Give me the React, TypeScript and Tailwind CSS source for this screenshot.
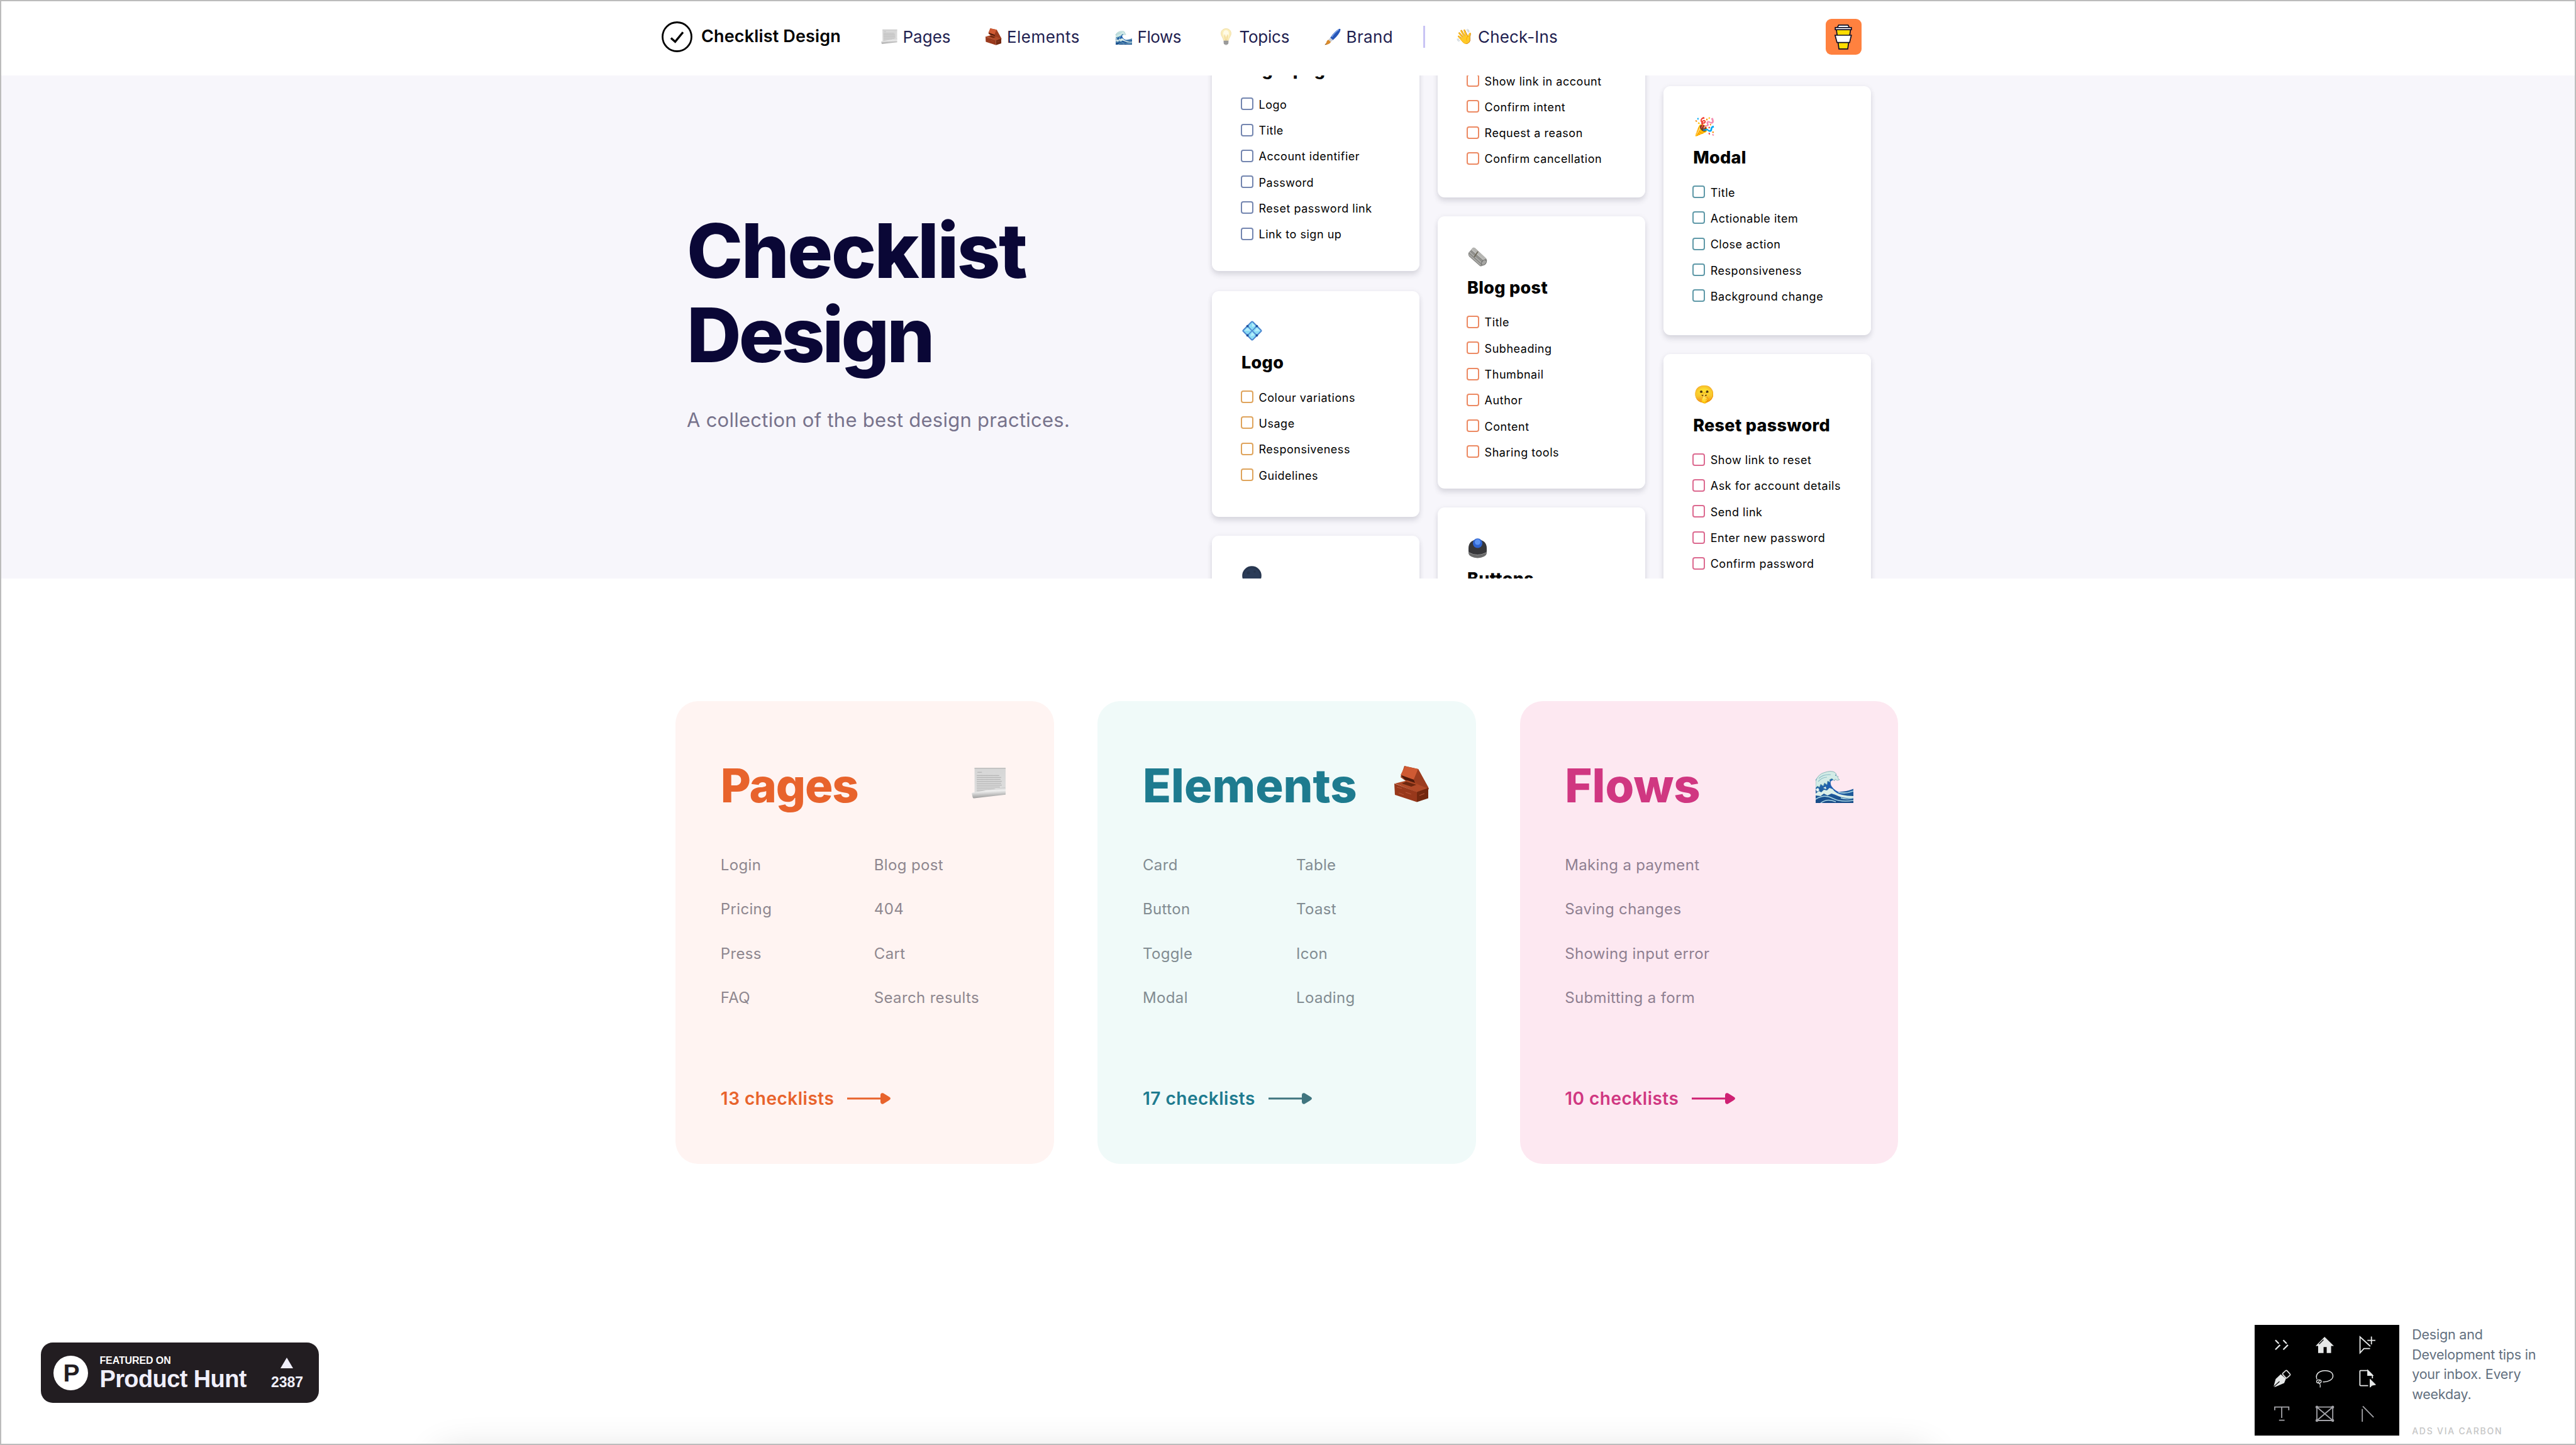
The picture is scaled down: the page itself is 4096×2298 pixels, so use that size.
import React from "react";

type IconProps = { className?: string };

function PageIcon({ className }: IconProps) {
  return (
    <svg viewBox="0 0 54 48" className={className}>
      <defs>
        <linearGradient id="roll" x1="0" y1="0" x2="0.15" y2="1">
          <stop offset="0" stopColor="#b4b4b4" />
          <stop offset="0.4" stopColor="#f0f0f0" />
          <stop offset="1" stopColor="#9c9c9c" />
        </linearGradient>
        <linearGradient id="sheet" x1="0" y1="0" x2="0" y2="1">
          <stop offset="0" stopColor="#d6d6d6" />
          <stop offset="1" stopColor="#dedede" />
        </linearGradient>
      </defs>
      <path d="M4.500 0H53v34L4.500 42Z" fill="url(#sheet)" />
      <path d="M4.500 0H53V1.400H4.500Z" fill="#bcbcbc" />
      <path d="M9 7h7M8 12h35M8 15h38M8 18h37M8 21h39M8 24h38M8 27h39M8 30h36M8 33h29M8 36h18" stroke="#a9a9a9" strokeWidth="0.900" />
      <path d="M1 39 51 30.500Q53 30 53 32V42L4 47.500Q2 47.800 1.600 46L0.300 40.500Q0 39.200 1 39Z" fill="url(#roll)" />
    </svg>
  );
}

function BrickIcon({ className }: IconProps) {
  return (
    <svg viewBox="0 0 56 58" className={className}>
      <path d="M16 0 38 5 54 34 53 42 28 31 10 18Z" fill="#a2401f" />
      <path d="M17 0.500 38 5 31 22 10 14.500Z" fill="#cf5a33" />
      <path d="M38 5 55 36 52 42 31 22Z" fill="#9c3d20" />
      <path d="M10 14.500 31 22 33 27 17 22Z" fill="#4d1a0c" />
      <path d="M1 28 21 23 54 36 36 42Z" fill="#b14a28" />
      <path d="M12 28 19 25 35 30 27 33Z" fill="#6b260f" />
      <path d="M0 28 36 41.500V57.500L1 46Z" fill="#98381b" />
      <path d="M36 41.500 54 35V51.500L36 57.500Z" fill="#73280f" />
      <path d="M4 34 12 36M18 42 27 45M7 43 15 46M40 47 48 44" stroke="#b9573a" strokeWidth="1" />
    </svg>
  );
}

function WaveIcon({ className }: IconProps) {
  return (
    <svg viewBox="0 0 60 51" className={className} preserveAspectRatio="none">
      <defs>
        <linearGradient id="sea" x1="0" y1="0" x2="0" y2="1">
          <stop offset="0" stopColor="#2f7cc4" />
          <stop offset="1" stopColor="#164a86" />
        </linearGradient>
      </defs>
      <path
        d="M0 14Q8 3 22 3L33 6 30 14Q20 16 23 25 26 32 34 33 46 34 60 28.500V51H0Z"
        fill="url(#sea)"
      />
      <path d="M20 13Q15 25 22 35L34 40 44 37Q30 32 25 24 22 18 26 13Z" fill="#1f5fb0" />
      <path d="M0 16Q4 5 14 2.500Q24-1 30 2L33 5 31 7 36 9 35 11 38 14 34 15 31 13 30 16 26 12 22 14 23 18 19 16 18 22 14 19 12 24 8 21 6 26 3 24 0 27Z" fill="#d3ebe6" stroke="#6fa5a8" strokeWidth="0.700" />
      <path d="M5 12Q12 5 24 6M4 17Q10 10 18 10" stroke="#8fbfca" strokeWidth="1.200" fill="none" />
      <path d="M0 36 5 32 9 34 13 30 18 31 22 27 27 29Q32 36 42 38 50 40 60 40V43Q46 44 36 40 30 37 25 36L19 39 13 36 8 40 0 39Z" fill="#dcefe8" />
      <path d="M0 45Q14 36 28 44 40 50 60 47M8 51Q18 43 32 49M36 34Q48 37 60 32M40 43Q50 46 60 43" stroke="#a9d5e2" strokeWidth="1.500" fill="none" />
      <path d="M0 29 4 27 6 31 2 33ZM12 27 16 25 17 29Z" fill="#e8f5f1" />
    </svg>
  );
}

function BulbIcon({ className }: IconProps) {
  return (
    <svg viewBox="0 0 17 27" className={className}>
      <path d="M8.500 0.500C13 0.500 16.500 3.700 16.500 8.200 16.500 12.500 12.800 15 12.400 19.500H4.600C4.200 15 0.500 12.500 0.500 8.200 0.500 3.700 4 0.500 8.500 0.500Z" fill="#fbeebb" stroke="#eed9a0" strokeWidth="0.800" />
      <ellipse cx="8.500" cy="8" rx="4.500" ry="5" fill="#fffbe6" />
      <path d="M6.500 10 7.300 19H9.700L10.500 10" fill="none" stroke="#e8c678" strokeWidth="0.800" />
      <path d="M4.700 19.500H12.300V24Q11 26.800 8.500 26.800 6 26.800 4.700 24Z" fill="#a9a9a9" />
      <path d="M4.700 21.500H12.300M5 23.800H12" stroke="#7c7c7c" strokeWidth="0.800" />
    </svg>
  );
}

function BrushIcon({ className }: IconProps) {
  return (
    <svg viewBox="0 0 27 27" className={className}>
      <path d="M24 0.500Q26.500-0.300 26.500 2 25 9 14 19L9.500 15Q17 4 24 0.500Z" fill="#2656b8" />
      <path d="M23.500 2Q17 6 12 14" stroke="#7fa6ea" strokeWidth="1.400" fill="none" />
      <path d="M9.500 15 14 19 10.500 22 6.500 18.500Z" fill="#c9ccd2" />
      <path d="M6.500 18.500 10.500 22Q8 26.500 0.500 26.800 3.500 24 3.500 21.500 4.500 19 6.500 18.500Z" fill="#d98a2b" />
      <path d="M3 25.900Q1.500 26.700 0.500 26.800L2.600 24.300Z" fill="#5a3a1a" />
    </svg>
  );
}

function DiamondIcon({ className }: IconProps) {
  return (
    <svg viewBox="0 0 32 32" className={className}>
      <path d="M14.200 1.300Q16-0.500 17.800 1.300L30.700 14.200Q32.500 16 30.700 17.800L17.800 30.700Q16 32.500 14.200 30.700L1.300 17.800Q-0.500 16 1.300 14.200Z" fill="#4b86cf" />
      <path d="M16 2.300 22.300 8.600 16 14.900 9.700 8.600ZM8.600 9.700 14.900 16 8.600 22.300 2.300 16ZM23.400 9.700 29.700 16 23.400 22.300 17.100 16ZM16 17.100 22.300 23.400 16 29.700 9.700 23.400Z" fill="#8adcf5" />
      <path d="M16 3.500 21 8.600 16 10ZM8.600 11 13.500 16 4 16ZM23.400 11 28.500 16 20 17ZM16 18.500 20 23 13 25Z" fill="#b5eefb" />
      <circle cx="8.600" cy="8.600" r="1.900" fill="#1f4f9e" />
      <circle cx="23.400" cy="8.600" r="1.900" fill="#1f4f9e" />
      <circle cx="8.600" cy="23.400" r="1.900" fill="#1f4f9e" />
      <circle cx="23.400" cy="23.400" r="1.900" fill="#1f4f9e" />
    </svg>
  );
}

function NewspaperIcon({ className }: IconProps) {
  return (
    <svg viewBox="0 0 31 31" className={className}>
      <path d="M1 9 8 1Q10 0 12 2L29 18Q31 20 30 23L24 29Q21 31.500 19 30L2 15Q0 12 1 9Z" fill="#8f8f8c" />
      <path d="M8 1Q10 0 12 2L29 18 25 21 5 4Z" fill="#b5b5b2" />
      <path d="M3 8 23 26M2 12 20 28M6 4 27 22" stroke="#d0d0cc" strokeWidth="0.900" />
      <path d="M10 16 16 7" stroke="#6e6a5c" strokeWidth="1.800" />
      <ellipse cx="25.500" cy="24.500" rx="3.200" ry="4.800" transform="rotate(40 25.500 24.500)" fill="#a5a5a2" stroke="#6a6a68" />
    </svg>
  );
}

function TrackballIcon({ className }: IconProps) {
  return (
    <svg viewBox="0 0 31 32" className={className}>
      <ellipse cx="15.500" cy="23" rx="14.500" ry="8.500" fill="#6a6a6a" />
      <path d="M1 16Q1 3 15.500 2 30 3 30 16V21Q26 27 15.500 27 5 27 1 21Z" fill="#37373a" />
      <path d="M2 23Q15 30 29 23" stroke="#9b9b9b" strokeWidth="1" fill="none" />
      <circle cx="15.500" cy="7.800" r="7.600" fill="#2f63cf" />
      <circle cx="15.500" cy="6" r="4.500" fill="#5c93f2" />
    </svg>
  );
}

function MoonIcon({ className }: IconProps) {
  return (
    <svg viewBox="0 0 31 31" className={className}>
      <circle cx="15.500" cy="15.500" r="15.300" fill="#27364f" />
      <circle cx="15.500" cy="16.500" r="13" fill="#2b3c58" />
      <circle cx="10" cy="11" r="2.500" fill="#26354c" />
      <circle cx="20" cy="9" r="1.800" fill="#26354c" />
    </svg>
  );
}

function CoffeeBadge() {
  return (
    <svg viewBox="0 0 57 57" className="size-[57px]">
      <rect width="57" height="57" rx="9" fill="#ff813f" />
      <path d="M17 17H39.500L35 47.800H21Z" fill="#ffdd00" stroke="#0d0c22" strokeWidth="1.700" />
      <path d="M14.900 26H40.700L38 37.600H18Z" fill="#fff" stroke="#0d0c22" strokeWidth="1.700" />
      <path d="M20.500 9.800H35.500L37.500 14H18.500Z" fill="#fff" stroke="#0d0c22" strokeWidth="1.700" />
      <rect x="15.200" y="13.800" width="25.600" height="3.400" fill="#fff" stroke="#0d0c22" strokeWidth="1.700" />
    </svg>
  );
}

const navItems = [
  { label: "Pages", track: "", icon: <PageIcon className="h-[25px] w-[26px]" /> },
  { label: "Elements", track: "tracking-[0.450px]", icon: <BrickIcon className="h-[27px] w-[26px]" /> },
  { label: "Flows", track: "tracking-[-0.450px]", icon: <WaveIcon className="mt-[4px] h-[22px] w-[26px]" /> },
  { label: "Topics", track: "tracking-[-0.250px]", icon: <BulbIcon className="h-[27px] w-[17px]" /> },
  { label: "Brand", track: "tracking-[0.400px]", icon: <BrushIcon className="size-[27px]" /> },
];

function NavLink({ label, track, icon }: { label: string; track: string; icon: React.ReactNode }) {
  return (
    <a className="flex items-center gap-[8.500px]">
      <span className="flex w-[26px] justify-center">{icon}</span>
      <span className={track}>{label}</span>
    </a>
  );
}

function Header() {
  return (
    <header className="flex h-[120px] items-center bg-white pr-[1136px] pb-[3.500px] pl-[1052px] text-[26px] text-[#1f2150]">
      <div className="flex w-[349px] items-center gap-[14px]">
        <svg viewBox="0 0 49 49" className="size-[49px]" fill="none" stroke="#000">
          <circle cx="24.500" cy="24.500" r="23" strokeWidth="2.800" />
          <path d="M14.900 26.400 21.600 32.400 34 17.200" strokeWidth="3.400" />
        </svg>
        <span className="text-[27px] font-semibold tracking-[0.150px] text-black">Checklist Design</span>
      </div>
      <nav className="grid grid-cols-[165.500px_207.500px_162px_170px_156.500px_3px_50px_200px] items-center">
        {navItems.map((n) => (
          <NavLink key={n.label} {...n} />
        ))}
        <div className="h-[35px] bg-[#c9c4f4]" />
        <div />
        <NavLink
          label="Check-Ins"
          track="tracking-[0.150px]"
          icon={<span className="font-['Noto_Color_Emoji'] text-[23px] leading-none">👋</span>}
        />
      </nav>
      <div className="ml-auto">
        <CoffeeBadge />
      </div>
    </header>
  );
}

type Checklist = {
  title?: string;
  icon?: React.ReactNode;
  items: string[];
  box: string;
  height: string;
};

function PreviewCard({ title, icon, items, box, height }: Checklist) {
  return (
    <article
      className={`flex w-[330px] shrink-0 flex-col rounded-[11px] bg-white pl-[46px] shadow-[0_6px_9px_rgba(40,35,60,0.130),0_0_9px_rgba(40,35,60,0.050)] ${height}`}
    >
      <div className="mt-[48.500px] ml-[2px] flex h-[32px] items-center">{icon}</div>
      <h3 className="mt-[16.500px] ml-[1px] h-[34px] text-[27px] leading-[34px] font-extrabold tracking-[0.300px] whitespace-nowrap">
        {title}
      </h3>
      <ul className="mt-[17.500px]">
        {items.map((item) => (
          <li key={item} className="flex h-[41.300px] items-center gap-[8.500px]">
            <span className={`-mt-[2px] size-[20px] rounded-[4px] border-2 ${box}`} />
            <span className="text-[18px] tracking-[0.530px] whitespace-nowrap">{item}</span>
          </li>
        ))}
      </ul>
    </article>
  );
}

const previewEmoji = "font-['Noto_Color_Emoji'] leading-none";

const columns: { offset: string; cards: Checklist[] }[] = [
  {
    offset: "-mt-[122.900px] gap-[30px]",
    cards: [
      {
        title: "Login page",
        items: ["Logo", "Title", "Account identifier", "Password", "Reset password link", "Link to sign up"],
        box: "border-[#7486b0]",
        height: "h-[433.600px] mb-[2.300px]",
      },
      {
        title: "Logo",
        icon: <DiamondIcon className="-mt-[3px] size-[32px]" />,
        items: ["Colour variations", "Usage", "Responsiveness", "Guidelines"],
        box: "border-[#dfa45c]",
        height: "h-[359px]",
      },
      {
        icon: <MoonIcon className="-mt-[2px] size-[31px]" />,
        items: [],
        box: "border-[#7486b0]",
        height: "h-[359px]",
      },
    ],
  },
  {
    offset: "-mt-[160.100px] gap-[30px]",
    cards: [
      {
        items: ["Show link in account", "Confirm intent", "Request a reason", "Confirm cancellation"],
        box: "border-[#ec8a63]",
        height: "h-[353.900px]",
      },
      {
        title: "Blog post",
        icon: <NewspaperIcon className="size-[31px]" />,
        items: ["Title", "Subheading", "Thumbnail", "Author", "Content", "Sharing tools"],
        box: "border-[#ec8a63]",
        height: "h-[433.600px]",
      },
      {
        title: "Buttons",
        icon: <TrackballIcon className="h-[32px] w-[31px]" />,
        items: [],
        box: "border-[#ec8a63]",
        height: "h-[359px]",
      },
    ],
  },
  {
    offset: "mt-[17px] gap-[30px]",
    cards: [
      {
        title: "Modal",
        icon: <span className={`text-[28px] ${previewEmoji}`}>🎉</span>,
        items: ["Title", "Actionable item", "Close action", "Responsiveness", "Background change"],
        box: "border-[#5f99a8]",
        height: "h-[395.500px]",
      },
      {
        title: "Reset password",
        icon: <span className={`text-[27px] ${previewEmoji}`}>🤫</span>,
        items: ["Show link to reset", "Ask for account details", "Send link", "Enter new password", "Confirm password"],
        box: "border-[#dc6a90]",
        height: "h-[395.500px]",
      },
    ],
  },
];

function Hero() {
  return (
    <section className="flex h-[800px] overflow-hidden bg-[#f7f6fb]">
      <div className="w-[1927px] shrink-0 pt-[212px] pl-[1092px]">
        <h1 className="text-[120px] leading-[134px] font-extrabold text-[#0a0736]">
          <span className="block tracking-[-2.600px]">Checklist</span>
          <span className="block tracking-[-4px]">Design</span>
        </h1>
        <p className="mt-[47.500px] text-[31px] leading-[40px] tracking-[0.260px] text-[#77738c]">
          A collection of the best design practices.
        </p>
      </div>
      <div className="flex items-start gap-[29.100px] text-black">
        {columns.map((c, i) => (
          <div key={i} className={`flex flex-col ${c.offset}`}>
            {c.cards.map((card, j) => (
              <PreviewCard key={j} {...card} />
            ))}
          </div>
        ))}
      </div>
    </section>
  );
}

const categories = [
  {
    title: "Pages",
    track: "tracking-[-1.200px]",
    icon: <PageIcon className="mr-[5.500px] mb-[3px] h-[49px] w-[55px]" />,
    lists: [
      ["Login", "Pricing", "Press", "FAQ"],
      ["Blog post", "404", "Cart", "Search results"],
    ],
    count: "13 checklists",
    card: "bg-[#fff4f2]",
    color: "text-[#e8632c]",
    item: "text-[#8e878f]",
    arrow: "text-[#e8632c]",
  },
  {
    title: "Elements",
    track: "",
    icon: <BrickIcon className="mr-[3.500px] mb-[1px] h-[58px] w-[56px]" />,
    lists: [
      ["Card", "Button", "Toggle", "Modal"],
      ["Table", "Toast", "Icon", "Loading"],
    ],
    count: "17 checklists",
    card: "bg-[#f0faf9]",
    color: "text-[#1e7b8f]",
    item: "text-[#828c92]",
    arrow: "text-[#40757f]",
  },
  {
    title: "Flows",
    track: "",
    icon: <WaveIcon className="mt-[9px] mr-[1px] h-[51px] w-[60px]" />,
    lists: [["Making a payment", "Saving changes", "Showing input error", "Submitting a form"]],
    count: "10 checklists",
    card: "bg-[#fde8f1]",
    color: "text-[#d03781]",
    item: "text-[#8f8091]",
    arrow: "text-[#cf2073]",
  },
];

function Categories() {
  return (
    <section className="flex gap-[69.800px] pt-[194.500px] pl-[1074.300px]">
      {categories.map((c) => (
        <article key={c.title} className={`h-[736px] w-[601.400px] rounded-[36px] pr-[70px] pl-[71.500px] ${c.card}`}>
          <div className="mt-[90px] flex h-[88px] items-center justify-between">
            <h2 className={`text-[74px] leading-[88px] font-extrabold ${c.track} ${c.color}`}>{c.title}</h2>
            <div className="-mt-[3px]">{c.icon}</div>
          </div>
          <div className="mt-[48px] flex">
            {c.lists.map((list) => (
              <ul key={list[0]} className="w-[244px] shrink-0">
                {list.map((t) => (
                  <li key={t} className={`h-[70.600px] text-[24px] leading-[70.600px] tracking-[0.350px] whitespace-nowrap ${c.item}`}>
                    {t}
                  </li>
                ))}
              </ul>
            ))}
          </div>
          <div className="mt-[104px] flex h-[40px] items-center gap-[21px]">
            <span className={`text-[28px] leading-[40px] font-semibold tracking-[0.500px] ${c.color}`}>{c.count}</span>
            <svg viewBox="0 0 69 18" className={`h-[18px] w-[69px] ${c.arrow}`}>
              <path d="M0 9H56" stroke="currentColor" strokeWidth="2.800" />
              <path d="M53 3.500Q53.500-0.500 57.500 0.600L66 5.800Q72 9 66 12.200L57.500 17.400Q53.500 18.500 53 14.500Z" fill="currentColor" />
            </svg>
          </div>
        </article>
      ))}
    </section>
  );
}

function ProductHuntBadge() {
  return (
    <a className="flex h-[95.600px] w-[441.700px] items-center rounded-[19px] bg-[#221d21] pr-[25px] pl-[19.500px] font-['Liberation_Sans'] font-bold text-[#f0effb]">
      <span className="flex size-[55px] items-center justify-center rounded-full bg-white pl-[2px] text-[39px] leading-none text-[#221d21]">
        P
      </span>
      <span className="ml-[18.500px] flex flex-col">
        <span className="text-[16px] leading-[18px] tracking-[-0.100px] text-white">FEATURED ON</span>
        <span className="mt-[1px] text-[38px] leading-[38px] tracking-[-0.600px] whitespace-nowrap">Product Hunt</span>
      </span>
      <span className="mt-[3px] ml-auto flex flex-col items-center">
        <svg viewBox="0 0 20 17" className="h-[17px] w-[20px]">
          <path d="M10 0 20 17H0Z" fill="currentColor" />
        </svg>
        <span className="mt-[9px] text-[23px] leading-[26px]">2387</span>
      </span>
    </a>
  );
}

function ToolGlyphs() {
  return (
    <svg viewBox="0 0 229.700 176.600" className="h-[176.600px] w-[229.700px] bg-black" fill="none" stroke="#e6e8e8" strokeWidth="1.800">
      <path d="M33 24.200 38.500 29.700M40.500 31.900 33 39.200M45.500 24.200 51 29.700M53 31.900 45.500 39.200" strokeWidth="2.200" />
      <path d="M111.200 19 126 33.500H121.600V44.700H114.600V35.200H109.600V44.700H101V33.500H97Z" fill="#e6e8e8" stroke="none" />
      <path d="M102.500 30.500 109.500 23.500" stroke="#000" strokeWidth="1.300" />
      <path d="M184 34 167.600 19V44.500L173.800 37.700H183.500M185.700 18.500V31M179.300 24.700H192" />
      <path d="M30 98.600 33.500 86 41.500 78.600 49.800 85.500 47 92.500 33 98.600Z" fill="#e6e8e8" stroke="none" />
      <path d="M30 98.600 39.500 90" stroke="#000" strokeWidth="1.200" />
      <rect x="46" y="73.500" width="9" height="10" rx="1.500" transform="rotate(-42 50.500 78.500)" strokeWidth="1.600" />
      <path d="M99 86.500C96 78 103 72.700 112 72.700S125 77 124.500 82 117 91 108.500 90.600" strokeWidth="1.500" />
      <ellipse cx="102.200" cy="90" rx="3.600" ry="2.600" strokeWidth="1.400" />
      <path d="M100.500 91.500Q105.500 93 104 99.500M103.500 88 101 92" strokeWidth="1.200" />
      <path d="M180.500 96.600H168.500Q167.400 96.600 167.400 95.500V73.800Q167.400 72.700 168.500 72.700H180L187.300 80V85" />
      <path d="M180 72.700V80H187.300Z" fill="#e6e8e8" />
      <path d="M183.600 86.300V99.200L186.500 96.200 192.400 95Z" fill="#e6e8e8" strokeWidth="1" />
      <g stroke="#a3a3a8">
        <path d="M32 135.800V130.700H54.300V135.800M43.100 130.700V148M38.800 151.700H47.600" />
        <path d="M99 130.700H124.200V152H99ZM99 130.700 124.200 152M124.200 130.700 99 152" />
        <path d="M171.200 133.700V154M172 129.300 189.200 147" />
      </g>
      <g fill="#a3a3a8" stroke="none">
        <circle cx="99" cy="130.700" r="2.200" />
        <circle cx="124.200" cy="130.700" r="2.200" />
        <circle cx="99" cy="152" r="2.200" />
        <circle cx="124.200" cy="152" r="2.200" />
      </g>
    </svg>
  );
}

function CarbonAd() {
  return (
    <aside className="flex w-[496px] gap-[20.500px]">
      <ToolGlyphs />
      <div className="w-[210px]">
        <p className="text-[21.500px] leading-[31.800px] tracking-[-0.200px] text-[#637080]">
          Design and Development tips in your inbox. Every weekday.
        </p>
        <p className="mt-[24px] text-[14px] leading-[36px] font-medium tracking-[1.750px] whitespace-nowrap text-[#c6c6c6]">ADS VIA CARBON</p>
      </div>
    </aside>
  );
}

export default function App() {
  return (
    <div className="relative flex h-[2298px] w-[4096px] flex-col overflow-hidden bg-white font-[Inter,sans-serif]">
      <Header />
      <Hero />
      <Categories />
      <footer className="mt-auto flex items-start justify-between pr-[15px] pb-[4px] pl-[65.400px]">
        <div className="pt-[28.500px]">
          <ProductHuntBadge />
        </div>
        <CarbonAd />
      </footer>
      <div className="pointer-events-none absolute top-[2304px] left-[690px] h-[60px] w-[2384px] rounded-[30px] shadow-[0_0_56px_rgba(0,0,0,0.120)]" />
      <div className="pointer-events-none absolute inset-0 border-2 border-[#bcbcbc]" />
    </div>
  );
}
